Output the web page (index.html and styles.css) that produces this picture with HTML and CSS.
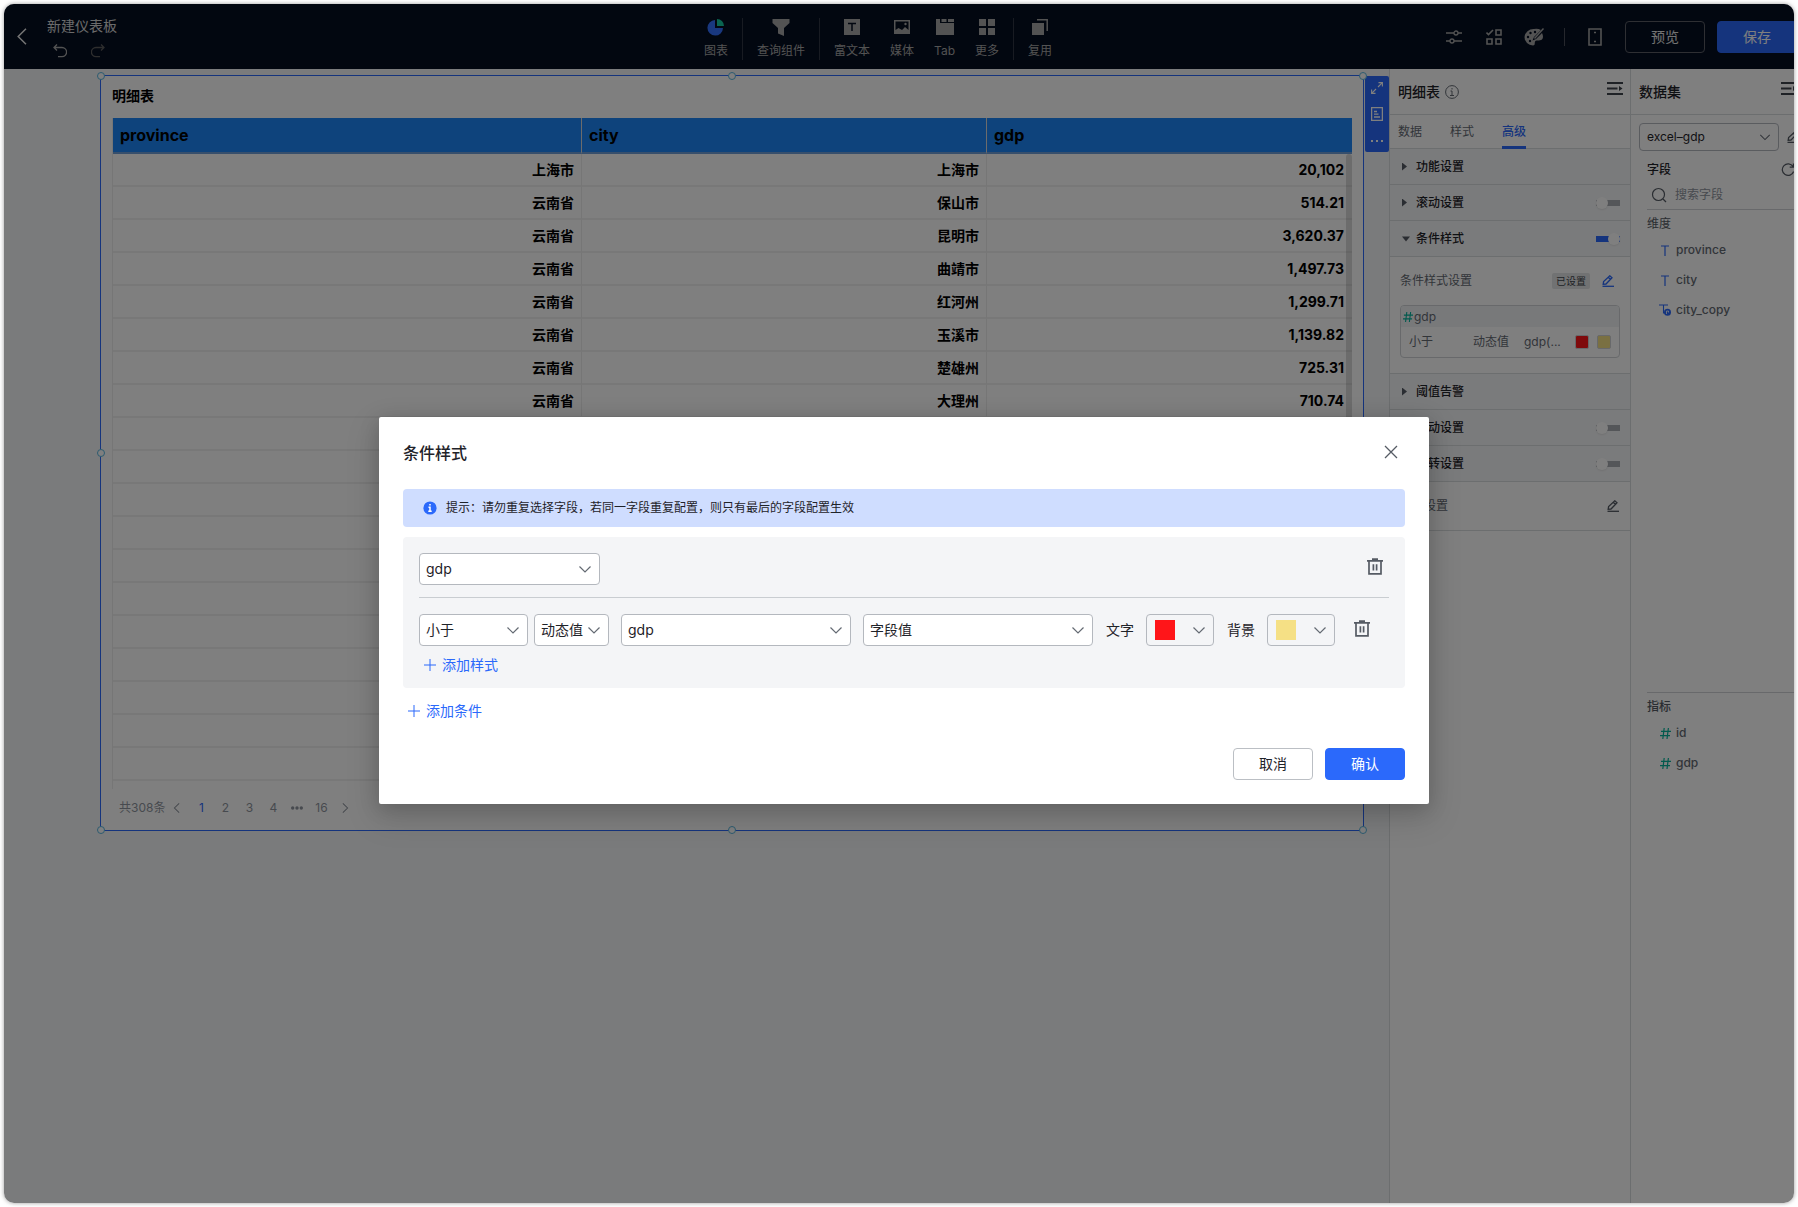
FILE: index.html
```html
<!DOCTYPE html>
<html lang="zh-CN">
<head>
<meta charset="utf-8">
<title>新建仪表板</title>
<link rel="stylesheet" href="styles.css">
</head>
<body>
<svg class="sprite" aria-hidden="true">
  <symbol id="chevron" viewBox="0 0 14 14"><path d="M1.500 4.500L7 10l5.500-5.500" fill="none" stroke="currentColor" stroke-width="1.200"/></symbol>
  <symbol id="trash" viewBox="0 0 16 17"><path d="M0 2.800h16M5 1.200h6M2 3v12.800h12V3M6.400 6.200v6.300M9.600 6.200v6.300" fill="none" stroke="currentColor" stroke-width="1.700"/></symbol>
  <symbol id="edit" viewBox="0 0 12 12"><path d="M1.200 9.200l.4-2.600L7.800.8l2.200 2L4 9zM6.200 2.200l2.100 2" fill="none" stroke="currentColor" stroke-width="1.300"/><path d="M.5 11.300H12" stroke="currentColor" stroke-width="1.300"/></symbol>
  <symbol id="plus" viewBox="0 0 12 12"><path d="M6 0v12M0 6h12" stroke="currentColor" stroke-width="1"/></symbol>
  <symbol id="hash" viewBox="0 0 11 11"><path d="M4.200 0L2.800 11M8.400 0L7 11M1 3.400h10M0 7.600h10" fill="none" stroke="currentColor" stroke-width="1.200"/></symbol>
  <symbol id="text" viewBox="0 0 10 11"><path d="M1 1h8M5 1v10" stroke="currentColor" stroke-width="1.200"/></symbol>
  <symbol id="fold" viewBox="0 0 16 13"><path d="M0 1h16M0 6.500h10.500M0 12h16" stroke="currentColor" stroke-width="2"/><path d="M12 4l3.500 2.500L12 9z" fill="currentColor"/></symbol>
</svg>

<div class="frame">
 <div class="app">
  <header class="topbar">
    <div class="topbar-left">
      <button class="icon-btn back" aria-label="返回"><svg width="10" height="17" viewBox="0 0 10 17"><path d="M9 .7L1.200 8.500 9 16.300" fill="none" stroke="currentColor" stroke-width="1.500"/></svg></button>
      <div class="doc">
        <span class="doc-name">新建仪表板</span>
        <div class="history">
          <button class="icon-btn" aria-label="撤销"><svg width="14" height="14" viewBox="0 0 14 14"><path d="M4 .5L1 3.500l3 3M1 3.500h8a4.500 4.500 0 010 9.200H5" fill="none" stroke="currentColor" stroke-width="1.300"/></svg></button>
          <button class="icon-btn faded" aria-label="重做"><svg width="14" height="14" viewBox="0 0 14 14"><path d="M10 .5l3 3-3 3M13 3.500H5a4.500 4.500 0 000 9.200h4" fill="none" stroke="currentColor" stroke-width="1.300"/></svg></button>
        </div>
      </div>
    </div>
    <nav class="tools">
      <div class="tool-group">
        <button class="tool"><svg width="18" height="18" viewBox="0 0 18 18"><path d="M8 2a7.800 7.800 0 108 8H8z" fill="#3370ff"/><path d="M10 1a7 7 0 017 7h-7z" fill="#14c9a0"/></svg>图表</button>
      </div>
      <div class="tool-group">
        <button class="tool"><svg width="18" height="18" viewBox="0 0 18 18"><path d="M.5 1h17v4L12 10v8l-6-2.500V10L.5 5z" fill="currentColor"/></svg>查询组件</button>
      </div>
      <div class="tool-group">
        <button class="tool"><svg width="18" height="18" viewBox="0 0 18 18"><path d="M1 1h16v16H1z" fill="currentColor"/><path d="M5 5.500h8M9 5.500V13" stroke="#050e21" stroke-width="1.500"/></svg>富文本</button>
        <button class="tool"><svg width="18" height="18" viewBox="0 0 18 18"><path d="M1 2h16v14H1z" fill="currentColor"/><path d="M2.500 12V3.500h13V12l-3.500-3-3 3-3.500-2z" fill="#050e21"/><circle cx="12.500" cy="6" r="1.200" fill="currentColor"/></svg>媒体</button>
        <button class="tool"><svg width="20" height="18" viewBox="0 0 20 18"><path d="M1 1h4v4h14v12H1zM6.500 1h5v3h-5zM13 1h6v3h-6z" fill="currentColor"/></svg>Tab</button>
        <button class="tool"><svg width="18" height="18" viewBox="0 0 18 18"><path d="M1 1h7v7H1zM10 1h7v7h-7zM1 10h7v7H1zM10 10h7v7h-7z" fill="currentColor"/></svg>更多</button>
      </div>
      <div class="tool-group">
        <button class="tool"><svg width="18" height="18" viewBox="0 0 18 18"><path d="M1 5h12v12H1z" fill="currentColor"/><path d="M6 1.800h10.200V13" fill="none" stroke="currentColor" stroke-width="1.500"/></svg>复用</button>
      </div>
    </nav>
    <div class="topbar-right">
      <button class="icon-btn" aria-label="参数"><svg width="16" height="16" viewBox="0 0 16 16"><path d="M0 4h8M12 4h4M0 12h4M8 12h8" stroke="currentColor" stroke-width="1.400"/><circle cx="10" cy="4" r="2" fill="none" stroke="currentColor" stroke-width="1.300"/><circle cx="6" cy="12" r="2" fill="none" stroke="currentColor" stroke-width="1.300"/></svg></button>
      <button class="icon-btn" aria-label="批量操作"><svg width="16" height="16" viewBox="0 0 16 16"><path d="M10 1h5v5h-5zM1 10h5v5H1zM10 10h5v5h-5zM.5 3.500l2 2 4.500-4.500" fill="none" stroke="currentColor" stroke-width="1.600"/></svg></button>
      <button class="icon-btn" aria-label="仪表板配置"><svg width="20" height="18" viewBox="0 0 20 18"><path d="M10 1a9 8.500 0 00-9.500 8A8.500 8.500 0 009 17.500c3 0 .8-3.500 2.800-4.700 2-1 6.700 1 7.200-3.800A8 8 0 0018 5l-6 6-3.500 1.500L10 9l7-7a10 10 0 00-7-1z" fill="currentColor"/><path d="M19.500.5l-9 10" stroke="currentColor" stroke-width="1.500"/><g fill="#050e21"><circle cx="4" cy="9" r="1.200"/><circle cx="6.500" cy="5" r="1.200"/><circle cx="11" cy="4" r="1.200"/><circle cx="6" cy="13" r="1.200"/></g></svg></button>
      <span class="rule"></span>
      <button class="icon-btn" aria-label="移动端"><svg width="14" height="18" viewBox="0 0 14 18"><path d="M1 1h12v16H1z" fill="none" stroke="currentColor" stroke-width="1.600"/><path d="M6 4.500h2M6 13.500h2" stroke="currentColor" stroke-width="1.600"/></svg></button>
      <button class="btn btn-preview">预览</button>
      <button class="btn btn-save">保存</button>
    </div>
  </header>

  <div class="workspace">
    <main class="canvas">
      <section class="chart">
        <span class="handle h-nw"></span><span class="handle h-n"></span><span class="handle h-ne"></span><span class="handle h-w"></span><span class="handle h-sw"></span><span class="handle h-s"></span><span class="handle h-se"></span>
        <h2 class="chart-title">明细表</h2>
        <div class="table-wrap">
        <table class="grid">
          <colgroup><col class="c1"><col class="c2"><col class="c3"></colgroup>
          <thead><tr><th>province</th><th>city</th><th>gdp</th></tr></thead>
          <tbody>
            <tr><td>上海市</td><td>上海市</td><td>20,102</td></tr>
            <tr><td>云南省</td><td>保山市</td><td>514.21</td></tr>
            <tr><td>云南省</td><td>昆明市</td><td>3,620.37</td></tr>
            <tr><td>云南省</td><td>曲靖市</td><td>1,497.73</td></tr>
            <tr><td>云南省</td><td>红河州</td><td>1,299.71</td></tr>
            <tr><td>云南省</td><td>玉溪市</td><td>1,139.82</td></tr>
            <tr><td>云南省</td><td>楚雄州</td><td>725.31</td></tr>
            <tr><td>云南省</td><td>大理州</td><td>710.74</td></tr>
            <tr><td></td><td></td><td></td></tr>
            <tr><td></td><td></td><td></td></tr>
            <tr><td></td><td></td><td></td></tr>
            <tr><td></td><td></td><td></td></tr>
            <tr><td></td><td></td><td></td></tr>
            <tr><td></td><td></td><td></td></tr>
            <tr><td></td><td></td><td></td></tr>
            <tr><td></td><td></td><td></td></tr>
            <tr><td></td><td></td><td></td></tr>
            <tr><td></td><td></td><td></td></tr>
            <tr><td></td><td></td><td></td></tr>
            <tr class="cut"><td></td><td></td><td></td></tr>
          </tbody>
        </table>
        <span class="scrollbar"></span>
        </div>
        <nav class="pager">
          <span class="total">共308条</span>
          <button aria-label="上一页"><svg class="turn-left" width="12" height="12"><use href="#chevron"/></svg></button>
          <button class="current">1</button><button>2</button><button>3</button><button>4</button>
          <button aria-label="更多页"><svg width="12" height="4" viewBox="0 0 12 4"><g fill="currentColor"><circle cx="1.700" cy="2" r="1.700"/><circle cx="6" cy="2" r="1.700"/><circle cx="10.300" cy="2" r="1.700"/></g></svg></button>
          <button>16</button>
          <button aria-label="下一页"><svg class="turn-right" width="12" height="12"><use href="#chevron"/></svg></button>
        </nav>
      </section>
      <div class="chart-tools">
        <button class="icon-btn" aria-label="放大"><svg width="12" height="12" viewBox="0 0 12 12"><path d="M7.500.6h3.900v3.900M11.400.6L7 5M4.500 11.400H.6V7.500M.6 11.400L5 7" fill="none" stroke="currentColor" stroke-width="1.100"/></svg></button>
        <button class="icon-btn" aria-label="查看数据"><svg width="12" height="14" viewBox="0 0 12 14"><path d="M.6.600h10.800v12.800H.6zM3 4.500h3M3 7.200h4.500M3 10h6" fill="none" stroke="currentColor" stroke-width="1.300"/></svg></button>
        <button class="icon-btn" aria-label="更多"><svg width="12" height="14" viewBox="0 0 12 14"><path d="M0 7h2M5 7h2M10 7h2" stroke="currentColor" stroke-width="2"/></svg></button>
      </div>
    </main>

    <aside class="config">
      <div class="side-head">
        <h2>明细表</h2>
        <svg class="muted" width="14" height="14" viewBox="0 0 14 14"><circle cx="7" cy="7" r="6.400" fill="none" stroke="currentColor"/><path d="M7 3v1.500M5.500 6H7v4.500M5 10.500h4" fill="none" stroke="currentColor"/></svg>
        <button class="icon-btn fold" aria-label="收起"><svg width="16" height="13"><use href="#fold"/></svg></button>
      </div>
      <div class="tabs"><button>数据</button><button>样式</button><button class="on">高级</button></div>
      <div class="section"><i class="tri"></i><span>功能设置</span></div>
      <label class="section"><i class="tri"></i><span>滚动设置</span><input class="switch" type="checkbox"></label>
      <label class="section"><i class="tri open"></i><span>条件样式</span><input class="switch" type="checkbox" checked></label>
      <div class="section-body">
        <div class="setting"><span>条件样式设置</span><em class="badge">已设置</em><button class="icon-btn blue" aria-label="编辑"><svg width="12" height="12"><use href="#edit"/></svg></button></div>
        <div class="rule-card">
          <div class="rule-field"><svg class="green" width="10" height="10"><use href="#hash"/></svg>gdp</div>
          <div class="rule-row"><span>小于</span><span>动态值</span><span>gdp(...</span><i class="dot red"></i><i class="dot yellow"></i></div>
        </div>
      </div>
      <div class="section"><i class="tri"></i><span>阈值告警</span></div>
      <label class="section"><i class="tri"></i><span>联动设置</span><input class="switch" type="checkbox"></label>
      <label class="section"><i class="tri"></i><span>跳转设置</span><input class="switch" type="checkbox"></label>
      <div class="setting last"><span>跳转设置</span><button class="icon-btn" aria-label="编辑"><svg width="12" height="12"><use href="#edit"/></svg></button></div>
    </aside>

    <aside class="dataset">
      <div class="side-head"><h2>数据集</h2><button class="icon-btn fold" aria-label="收起"><svg width="16" height="13"><use href="#fold"/></svg></button></div>
      <div class="source">
        <div class="select small"><select aria-label="数据集"><option>excel–gdp</option></select><svg width="12" height="12"><use href="#chevron"/></svg></div>
        <button class="icon-btn" aria-label="编辑数据集"><svg width="12" height="12"><use href="#edit"/></svg></button>
      </div>
      <div class="fields">
        <div class="fields-head"><strong>字段</strong><button class="icon-btn" aria-label="刷新"><svg width="14" height="14" viewBox="0 0 14 14"><path d="M12 3.500A5.800 5.800 0 1012.600 8.500M12.400.5v3.700H8.700" fill="none" stroke="currentColor" stroke-width="1.200"/></svg></button></div>
        <label class="search"><svg width="16" height="16" viewBox="0 0 16 16"><circle cx="7.500" cy="7.500" r="6" fill="none" stroke="currentColor" stroke-width="1.200"/><path d="M12 12l3 3" stroke="currentColor" stroke-width="1.200"/></svg><input type="text" placeholder="搜索字段" aria-label="搜索字段"></label>
        <div class="group dims">
          <h3>维度</h3>
          <ul>
            <li><svg class="blue" width="10" height="11"><use href="#text"/></svg>province</li>
            <li><svg class="blue" width="10" height="11"><use href="#text"/></svg>city</li>
            <li><svg class="blue copy" width="12" height="12" viewBox="0 0 12 12"><path d="M0 1h9M4.500 1v8h2" fill="none" stroke="currentColor" stroke-width="1.100"/><circle cx="8.500" cy="8.300" r="3.500" fill="currentColor"/><path d="M7.500 10V7h2v1.500" fill="none" stroke="#fff" stroke-width=".8"/></svg>city_copy</li>
          </ul>
        </div>
        <div class="group metrics">
          <h3>指标</h3>
          <ul>
            <li><svg class="green" width="11" height="11"><use href="#hash"/></svg>id</li>
            <li><svg class="green" width="11" height="11"><use href="#hash"/></svg>gdp</li>
          </ul>
        </div>
      </div>
    </aside>
  </div>

  <div class="overlay">
    <div class="dialog" role="dialog" aria-labelledby="dlg-title">
      <div class="dialog-head"><h1 id="dlg-title">条件样式</h1><button class="icon-btn" aria-label="关闭"><svg width="14" height="14" viewBox="0 0 14 14"><path d="M1 1l12 12M13 1L1 13" stroke="currentColor" stroke-width="1.300"/></svg></button></div>
      <div class="notice"><svg width="14" height="14" viewBox="0 0 14 14"><circle cx="7" cy="7" r="6.600" fill="#2b69fb"/><path d="M7 3v1.600M5.500 6.200H7V10M5.300 10.200h3.400" fill="none" stroke="#fff" stroke-width="1.500"/></svg>提示：请勿重复选择字段，若同一字段重复配置，则只有最后的字段配置生效</div>
      <div class="condition">
        <div class="condition-head">
          <div class="select w-field"><select aria-label="字段"><option>gdp</option></select><svg width="14" height="14"><use href="#chevron"/></svg></div>
          <button class="icon-btn" aria-label="删除条件"><svg width="16" height="17"><use href="#trash"/></svg></button>
        </div>
        <div class="condition-row">
          <div class="select w-op"><select aria-label="比较"><option>小于</option></select><svg width="14" height="14"><use href="#chevron"/></svg></div>
          <div class="select w-type"><select aria-label="值类型"><option>动态值</option></select><svg width="14" height="14"><use href="#chevron"/></svg></div>
          <div class="select grow"><select aria-label="动态字段"><option>gdp</option></select><svg width="14" height="14"><use href="#chevron"/></svg></div>
          <div class="select grow"><select aria-label="取值"><option>字段值</option></select><svg width="14" height="14"><use href="#chevron"/></svg></div>
          <span class="color-label">文字</span>
          <button class="color" aria-label="文字颜色"><i class="red"></i><svg width="14" height="14"><use href="#chevron"/></svg></button>
          <span class="color-label">背景</span>
          <button class="color" aria-label="背景颜色"><i class="yellow"></i><svg width="14" height="14"><use href="#chevron"/></svg></button>
          <button class="icon-btn row-del" aria-label="删除样式"><svg width="16" height="17"><use href="#trash"/></svg></button>
        </div>
        <button class="add"><svg width="12" height="12"><use href="#plus"/></svg>添加样式</button>
      </div>
      <button class="add"><svg width="12" height="12"><use href="#plus"/></svg>添加条件</button>
      <div class="dialog-foot"><button class="btn">取消</button><button class="btn btn-primary">确认</button></div>
    </div>
  </div>
 </div>
</div>
</body>
</html>
```

FILE: styles.css
```css
* { box-sizing: border-box; }
html, body { height: 100%; }
body {
  margin: 0;
  padding: 4px;
  background: #fff;
  color: #1f2329;
  font: 12px/20px Inter, "Noto Sans CJK SC", sans-serif;
}
h1, h2, h3, ul { margin: 0; padding: 0; font-weight: 500; list-style: none; }
button, select, input { font: inherit; color: inherit; margin: 0; }
button { padding: 0; border: 0; background: none; }
svg { display: block; flex: none; }
.sprite { display: none; }
.icon-btn { display: flex; flex: none; color: #555b64; }
.blue { color: #2b69fb; }
.green { color: #04b49c; }
.muted { color: #646a73; }
.red { background: #ff1519; }
.yellow { background: #f5e085; }

.frame {
  height: 100%;
  border-radius: 10px;
  overflow: hidden;
  box-shadow: 0 0 4px rgba(0, 0, 0, .4);
}
/* the app runs slightly past the window's right edge */
.app {
  position: relative;
  width: calc(100% + 10px);
  height: 100%;
  display: flex;
  flex-direction: column;
}

/* top bar */
.topbar {
  display: grid;
  grid-template-columns: 1fr auto 1fr;
  align-items: center;
  height: 65px;
  flex: none;
  padding: 0 7px 0 13px;
  background: #050e21;
  color: #a6a6a6;
}
.topbar .icon-btn { color: #a6a6a6; }
.topbar-left { display: flex; align-items: center; gap: 20px; }
.topbar .back { color: #e6e6e6; }
.doc-name { display: block; font-size: 14px; line-height: 20px; color: #d6d6d6; }
.history { display: flex; gap: 24px; padding: 8px 0 0 6px; }
.topbar .faded { color: #5c5c5c; }
.tools { display: flex; margin-right: 58px; padding-top: 4px; }
.tool-group { display: flex; gap: 20px; padding: 0 14px; }
.tool-group + .tool-group { border-left: 1px solid #303644; }
.tool { display: flex; flex-direction: column; align-items: center; gap: 6px; line-height: 18px; }
.topbar-right { display: flex; align-items: center; justify-content: flex-end; }
.topbar-right .icon-btn { width: 20px; justify-content: center; margin-right: 20px; }
.rule { width: 1px; height: 18px; margin-right: 20px; background: #4a4f5a; }
.btn {
  width: 80px;
  height: 32px;
  border: 1px solid #bbbfc4;
  border-radius: 4px;
  font-size: 14px;
}
.btn-preview { border-color: #5c5f67; color: #e6e6e6; margin-right: 12px; }
.btn-save, .btn-primary { background: #2b69fb; border-color: #2b69fb; color: #fff; }

/* workspace */
.workspace { display: flex; flex: 1; min-height: 0; }
.canvas {
  flex: 1;
  min-width: 0;
  display: flex;
  align-items: flex-start;
  gap: 1px;
  padding: 6px 0 0 96px;
  background: #f5f6f8;
}
.chart {
  position: relative;
  flex: 1;
  padding: 10px 11px 12px;
  border: 1px solid #2b69fb;
  background: #fff;
}
.handle {
  position: absolute;
  width: 8px;
  height: 8px;
  border: 1px solid #59b7e0;
  border-radius: 50%;
  background: #fff;
}
.h-nw, .h-n, .h-ne { top: -4px; }
.h-sw, .h-s, .h-se { bottom: -4px; }
.h-nw, .h-w, .h-sw { left: -4px; }
.h-ne, .h-se { right: -4px; }
.h-n, .h-s { left: calc(50% - 4px); }
.h-w { top: calc(50% - 4px); }
.chart-title { color: #000; font-size: 14px; line-height: 20px; font-weight: 600; margin-bottom: 12px; }
.table-wrap { position: relative; }
.grid {
  width: 100%;
  table-layout: fixed;
  border-collapse: separate;
  border-spacing: 0;
  border-left: 1px solid #ececec;
  color: #000;
  font-weight: 700;
}
.c1 { width: 469px; }
.c2 { width: 405px; }
.c3 { width: auto; }
.grid th {
  height: 36px;
  padding: 0 7px;
  background: #1c86f8;
  border-bottom: 2px solid #6f9fd8;
  border-right: 1px solid #d8d8d8;
  font-size: 16px;
  text-align: left;
}
.grid td {
  height: 33px;
  padding: 0 7px;
  border-bottom: 2px solid #f0f0f0;
  border-right: 1px solid #ececec;
  font-size: 14px;
  text-align: right;
}
.grid th:last-child, .grid td:last-child { border-right: 0; }
.grid td:last-child { padding-right: 8px; }
.grid .cut td { height: 8px; border-bottom: 0; }
.scrollbar { position: absolute; right: 0; top: 36px; bottom: 0; width: 6px; border-radius: 3px 3px 0 0; background: rgba(0, 0, 0, .15); }
.pager { display: flex; align-items: center; padding: 9px 7px 0; color: #8f959e; }
.pager button { width: 24px; display: flex; justify-content: center; font-size: 12px; }
.pager .current { color: #2b69fb; }
.turn-left { transform: rotate(90deg); }
.turn-right { transform: rotate(-90deg); }
.chart-tools {
  display: flex;
  flex-direction: column;
  align-items: center;
  gap: 13px;
  width: 24px;
  height: 76px;
  margin-top: 1px;
  padding-top: 6px;
  border-radius: 2px;
  background: #2b69fb;
}
.chart-tools .icon-btn { color: #fff; }

/* side panels */
.config, .dataset { flex: none; border-left: 1px solid #d9dcdf; background: #fff; }
.config { width: 241px; }
.dataset { width: 174px; }
.side-head {
  display: flex;
  align-items: center;
  gap: 5px;
  height: 46px;
  padding: 0 7px 0 8px;
  border-bottom: 1px solid #d9dcdf;
}
.side-head h2 { font-size: 14px; }
.fold { margin: 0 0 6px auto; color: #3f444c; }
.tabs { display: flex; gap: 28px; height: 34px; padding: 0 8px; border-bottom: 1px solid #d9dcdf; color: #646a73; }
.tabs .on { color: #2b69fb; font-weight: 500; box-shadow: 0 1px #2b69fb, inset 0 -2px #2b69fb; }
.section {
  display: flex;
  align-items: center;
  gap: 8px;
  height: 36px;
  padding: 0 10px 0 12px;
  border-bottom: 1px solid #d9dcdf;
  background: #f5f6f8;
  font-weight: 500;
}
.tri { width: 6px; height: 8px; background: #555b64; clip-path: polygon(0 0, 5px 50%, 0 100%); }
.tri.open { width: 8px; margin-right: -2px; clip-path: polygon(0 2px, 100% 2px, 50% 7px); }
.switch {
  appearance: none;
  width: 24px;
  height: 12px;
  margin-left: auto;
  background: linear-gradient(#a8acb2, #a8acb2) center / 24px 6px no-repeat;
}
.switch::before { content: ""; display: block; width: 12px; height: 12px; border-radius: 50%; background: #fff; box-shadow: 0 1px 2px rgba(0, 0, 0, .08); }
.switch:checked { background-image: linear-gradient(#2b69fb, #2b69fb); }
.switch:checked::before { margin-left: 12px; }
.section-body { padding: 14px 10px 15px; border-bottom: 1px solid #d9dcdf; }
.setting { display: flex; align-items: center; height: 20px; color: #646a73; }
.setting .icon-btn { margin-right: 6px; }
.badge { margin: 0 12px 0 auto; padding: 0 4px; border-radius: 2px; background: #e3e4e6; color: #3f444c; font: 10px/16px Inter, "Noto Sans CJK SC", sans-serif; }
.rule-card { margin-top: 14px; border: 1px solid #d0d3d6; border-radius: 4px; overflow: hidden; color: #646a73; }
.rule-field { display: flex; align-items: center; gap: 1px; height: 21px; padding-left: 2px; background: #f0f2f5; }
.rule-row { display: grid; grid-template-columns: 64px 51px 51px 22px 14px; align-items: center; height: 30px; padding: 0 8px; }
.dot { width: 14px; height: 14px; border: 1px solid #d0d3d6; border-radius: 2px; }
.last { height: 49px; padding: 0 5px 0 10px; border-bottom: 1px solid #d9dcdf; }
.last .icon-btn { margin-left: auto; }

.select { display: grid; align-items: center; }
.select select, .select svg { grid-area: 1 / 1; }
.select select {
  appearance: none;
  width: 100%;
  height: 32px;
  padding: 0 6px;
  border: 1px solid #b4b8be;
  border-radius: 4px;
  background: #fff;
  font-size: 14px;
}
.select svg { justify-self: end; margin-right: 8px; color: #646a73; pointer-events: none; }
.select.small { flex: none; width: 140px; }
.select.small select { height: 28px; padding: 0 7px; font-size: 12px; }
.source { display: flex; align-items: center; gap: 8px; padding: 8px; }
.fields { padding-left: 16px; }
.fields-head { display: flex; align-items: center; justify-content: space-between; padding: 1px 9px 0 0; }
.fields-head strong { font-weight: 500; }
.search { display: flex; align-items: center; gap: 8px; height: 30px; padding-left: 4px; border-bottom: 1px solid #d0d3d6; color: #555b64; }
.search input { width: 100%; min-width: 0; padding: 0; border: 0; background: none; }
.search input::placeholder { color: #8f959e; opacity: 1; }
.group h3 { font-size: 12px; line-height: 20px; color: #555b64; font-weight: 400; }
.group li { display: flex; align-items: center; gap: 6px; height: 30px; padding-left: 13px; color: #646a73; }
.group .copy { margin: 0 -1px; }
.dims { min-height: 482px; padding-top: 4px; }
.dims ul { padding-top: 1px; }
.metrics { border-top: 1px solid #d0d3d6; padding-top: 4px; }
.metrics ul { padding-top: 1px; }
.metrics li { gap: 5px; }
.metrics h3 { font-weight: 500; }

/* dialog */
.overlay {
  position: absolute;
  inset: 0;
  display: flex;
  align-items: center;
  justify-content: center;
  padding-top: 14px;
  background: rgba(0, 0, 0, .5);
}
.dialog {
  width: 1050px;
  padding: 24px;
  border-radius: 2px;
  background: #fff;
  box-shadow: 0 12px 32px 4px rgba(0, 0, 0, .12), 0 4px 20px rgba(0, 0, 0, .15);
}
.dialog-head { display: flex; align-items: center; justify-content: space-between; height: 24px; margin-bottom: 24px; padding-right: 7px; }
.dialog-head .icon-btn { padding-bottom: 2px; }
.dialog-head h1 { font-size: 16px; }
.notice { display: flex; align-items: center; gap: 9px; height: 38px; padding-left: 20px; border-radius: 4px; background: #cfddff; }
.condition { margin: 10px 0 12px; padding: 16px 16px 12px; border-radius: 4px; background: #f4f5f7; }
.condition-head { display: flex; justify-content: space-between; height: 45px; padding-right: 6px; border-bottom: 1px solid #c9cdd1; }
.condition-head .icon-btn { align-self: flex-start; padding-top: 5px; }
.w-field { width: 181px; height: 32px; }
.condition-row { display: flex; align-items: center; padding-top: 16px; }
.w-op { width: 109px; }
.w-type { width: 75px; margin-left: 6px; }
.grow { flex: 1; margin-left: 12px; }
.color-label { margin: 0 12px 0 13px; font-size: 14px; }
.color { display: flex; align-items: center; justify-content: space-between; width: 68px; height: 32px; padding: 0 7px 0 8px; border: 1px solid #b4b8be; border-radius: 4px; color: #646a73; }
.color i { width: 20px; height: 20px; }
.row-del { margin: 0 19px 4px; }
.add { display: flex; align-items: center; gap: 6px; height: 22px; margin-top: 8px; padding-left: 5px; color: #2b69fb; font-size: 14px; }
.dialog-foot { display: flex; justify-content: flex-end; gap: 12px; margin-top: 26px; }
```
